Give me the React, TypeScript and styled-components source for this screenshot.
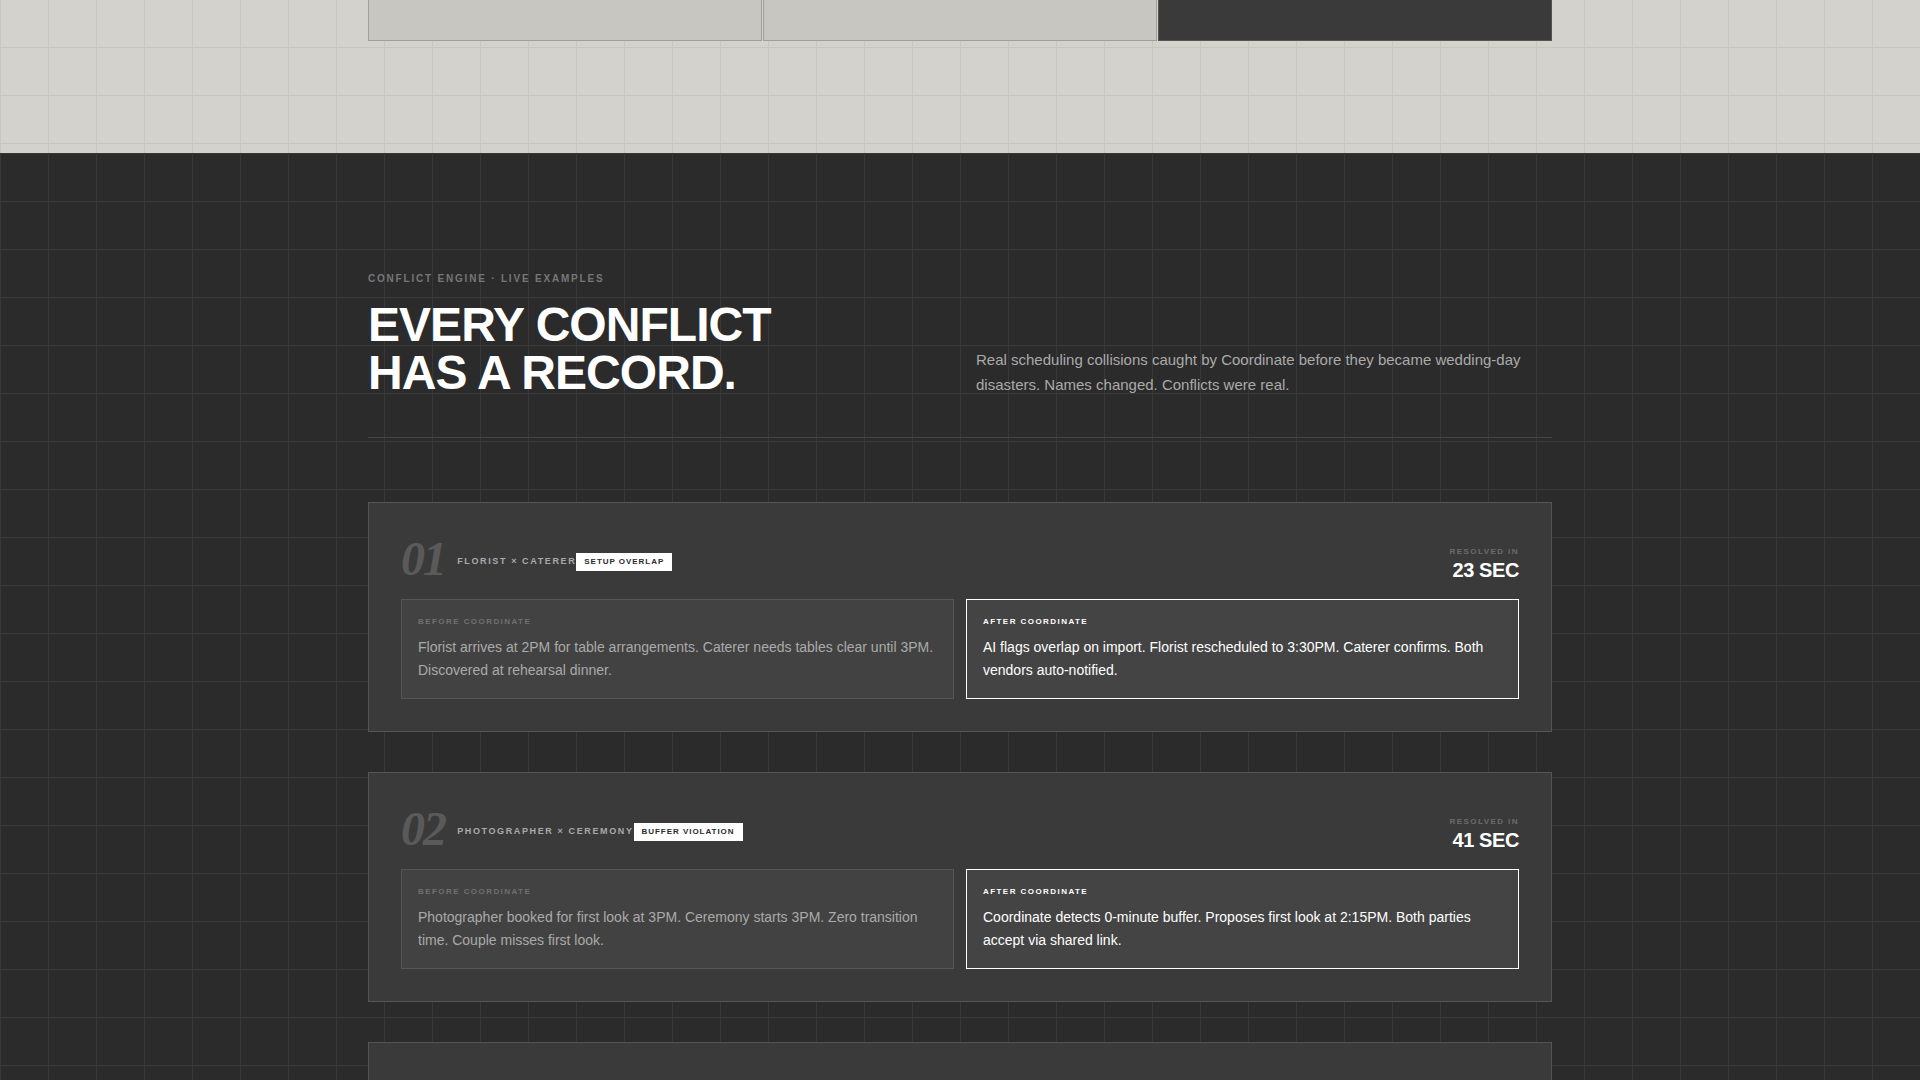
import React from "react";
import styled, { createGlobalStyle } from "styled-components";

const sans = `"Liberation Sans", Arial, Helvetica, sans-serif`;
const serif = `"Liberation Serif", "Times New Roman", serif`;

const GlobalStyle = createGlobalStyle`
  *, *::before, *::after { box-sizing: border-box; }
  body {
    margin: 0;
    background: #2b2b2b;
    color: #ffffff;
    font-family: ${sans};
    font-size: 16px;
  }
  h2, h3, p { margin: 0; }
`;

const Page = styled.main`
  display: flex;
  flex-direction: column;
  height: 100vh;
  overflow: hidden;
`;

const Container = styled.div`
  max-width: 1280px;
  margin: 0 auto;
  padding: 0 48px;
`;

const gridLines = (color: string) => `
  background-image:
    linear-gradient(${color} 1px, transparent 1px),
    linear-gradient(90deg, ${color} 1px, transparent 1px);
  background-size: 48px 48px;
`;

const LightSection = styled.section`
  flex: none;
  padding-bottom: 112px;
  background-color: #d4d2cc;
  ${gridLines("#c8c6c0")}
  background-position: 0 -1px;
`;

const Tiles = styled.div`
  display: grid;
  grid-template-columns: repeat(3, 1fr);
  gap: 1px;
`;

const Tile = styled.div<{ $dark?: boolean }>`
  min-height: 41px;
  background: ${(p) => (p.$dark ? "#3a3a3a" : "#c8c6c0")};
  border: 1px solid ${(p) => (p.$dark ? "#555555" : "#a09e9a")};
  border-top: 0;
`;

const DarkSection = styled.section`
  flex: 1;
  min-height: 0;
  padding: 120px 0;
  background-color: #2b2b2b;
  ${gridLines("#383838")}
`;

const SectionHead = styled.header`
  display: grid;
  grid-template-columns: 1fr 1fr;
  gap: 32px;
  align-items: end;
  padding-bottom: 40px;
  margin-bottom: 64px;
  border-bottom: 1px solid #444444;
`;

const Eyebrow = styled.p`
  margin-bottom: 16px;
  font-size: 10px;
  font-weight: 700;
  line-height: 12px;
  letter-spacing: 0.18em;
  text-transform: uppercase;
  color: #777777;
`;

const Title = styled.h2`
  font-size: 48px;
  font-weight: 700;
  line-height: 48px;
  letter-spacing: -0.02em;
  text-transform: uppercase;
`;

const Intro = styled.p`
  font-size: 15px;
  line-height: 25px;
  color: #aaaaaa;
`;

const CardList = styled.div`
  display: flex;
  flex-direction: column;
  gap: 40px;
`;

const Card = styled.article`
  min-height: 230px;
  padding: 32px;
  background: #3a3a3a;
  border: 1px solid #555555;
`;

const CardHead = styled.div`
  display: flex;
  justify-content: space-between;
  align-items: flex-end;
  margin-bottom: 16px;
`;

const CardTitle = styled.div`
  display: flex;
  align-items: center;
  gap: 12px;
`;

const Index = styled.span`
  font-family: ${serif};
  font-size: 48px;
  font-style: italic;
  font-weight: 700;
  line-height: 48px;
  letter-spacing: -0.04em;
  color: #5a5a5a;
`;

const Labels = styled.div`
  padding-top: 2px;
  line-height: 26px;
`;

const Parties = styled.h3`
  display: inline;
  font-size: 9px;
  font-weight: 700;
  letter-spacing: 0.18em;
  text-transform: uppercase;
  color: #aaaaaa;
`;

const Tag = styled.span`
  display: inline-block;
  padding: 3px 8px;
  background: #ffffff;
  color: #2b2b2b;
  font-size: 8px;
  font-weight: 700;
  line-height: 12px;
  letter-spacing: 0.12em;
  text-transform: uppercase;
`;

const Resolved = styled.div`
  text-align: right;
`;

const SmallLabel = styled.p<{ $color: string }>`
  font-size: 8px;
  font-weight: 700;
  line-height: 12px;
  letter-spacing: 0.18em;
  text-transform: uppercase;
  color: ${(p) => p.$color};
`;

const Duration = styled.p`
  font-size: 20px;
  font-weight: 700;
  line-height: 25px;
  letter-spacing: -0.02em;
`;

const Comparison = styled.div`
  display: grid;
  grid-template-columns: 1fr 1fr;
  gap: 12px;
`;

const Panel = styled.section<{ $after?: boolean }>`
  display: flex;
  flex-direction: column;
  gap: 8px;
  padding: 16px;
  background: ${(p) => (p.$after ? "#444444" : "#424242")};
  border: 1px solid ${(p) => (p.$after ? "#ffffff" : "#555555")};
  color: ${(p) => (p.$after ? "#ffffff" : "#aaaaaa")};
`;

const PanelText = styled.p`
  font-size: 14px;
  line-height: 23px;
`;

type Conflict = {
  index: string;
  parties: string;
  tag: string;
  duration: string;
  before: string;
  after: string;
};

const conflicts: Conflict[] = [
  {
    index: "01",
    parties: "Florist × Caterer",
    tag: "Setup Overlap",
    duration: "23 SEC",
    before:
      "Florist arrives at 2PM for table arrangements. Caterer needs tables clear until 3PM. Discovered at rehearsal dinner.",
    after:
      "AI flags overlap on import. Florist rescheduled to 3:30PM. Caterer confirms. Both vendors auto-notified.",
  },
  {
    index: "02",
    parties: "Photographer × Ceremony",
    tag: "Buffer Violation",
    duration: "41 SEC",
    before:
      "Photographer booked for first look at 3PM. Ceremony starts 3PM. Zero transition time. Couple misses first look.",
    after:
      "Coordinate detects 0-minute buffer. Proposes first look at 2:15PM. Both parties accept via shared link.",
  },
];

function ConflictCard({ index, parties, tag, duration, before, after }: Conflict) {
  return (
    <Card>
      <CardHead>
        <CardTitle>
          <Index>{index}</Index>
          <Labels>
            <Parties>{parties}</Parties>
            <Tag>{tag}</Tag>
          </Labels>
        </CardTitle>
        <Resolved>
          <SmallLabel $color="#6c6c6c">Resolved in</SmallLabel>
          <Duration>{duration}</Duration>
        </Resolved>
      </CardHead>
      <Comparison>
        <Panel>
          <SmallLabel $color="#707070">Before Coordinate</SmallLabel>
          <PanelText>{before}</PanelText>
        </Panel>
        <Panel $after>
          <SmallLabel $color="#ffffff">After Coordinate</SmallLabel>
          <PanelText>{after}</PanelText>
        </Panel>
      </Comparison>
    </Card>
  );
}

export default function App() {
  return (
    <>
      <GlobalStyle />
      <Page>
        <LightSection>
          <Container>
            <Tiles>
              <Tile />
              <Tile />
              <Tile $dark />
            </Tiles>
          </Container>
        </LightSection>
        <DarkSection>
          <Container>
            <SectionHead>
              <div>
                <Eyebrow>Conflict Engine · Live Examples</Eyebrow>
                <Title>
                  Every conflict
                  <br />
                  has a record.
                </Title>
              </div>
              <Intro>
                Real scheduling collisions caught by Coordinate before they became wedding-day
                disasters. Names changed. Conflicts were real.
              </Intro>
            </SectionHead>
            <CardList>
              {conflicts.map((c) => (
                <ConflictCard key={c.index} {...c} />
              ))}
              <Card />
            </CardList>
          </Container>
        </DarkSection>
      </Page>
    </>
  );
}
